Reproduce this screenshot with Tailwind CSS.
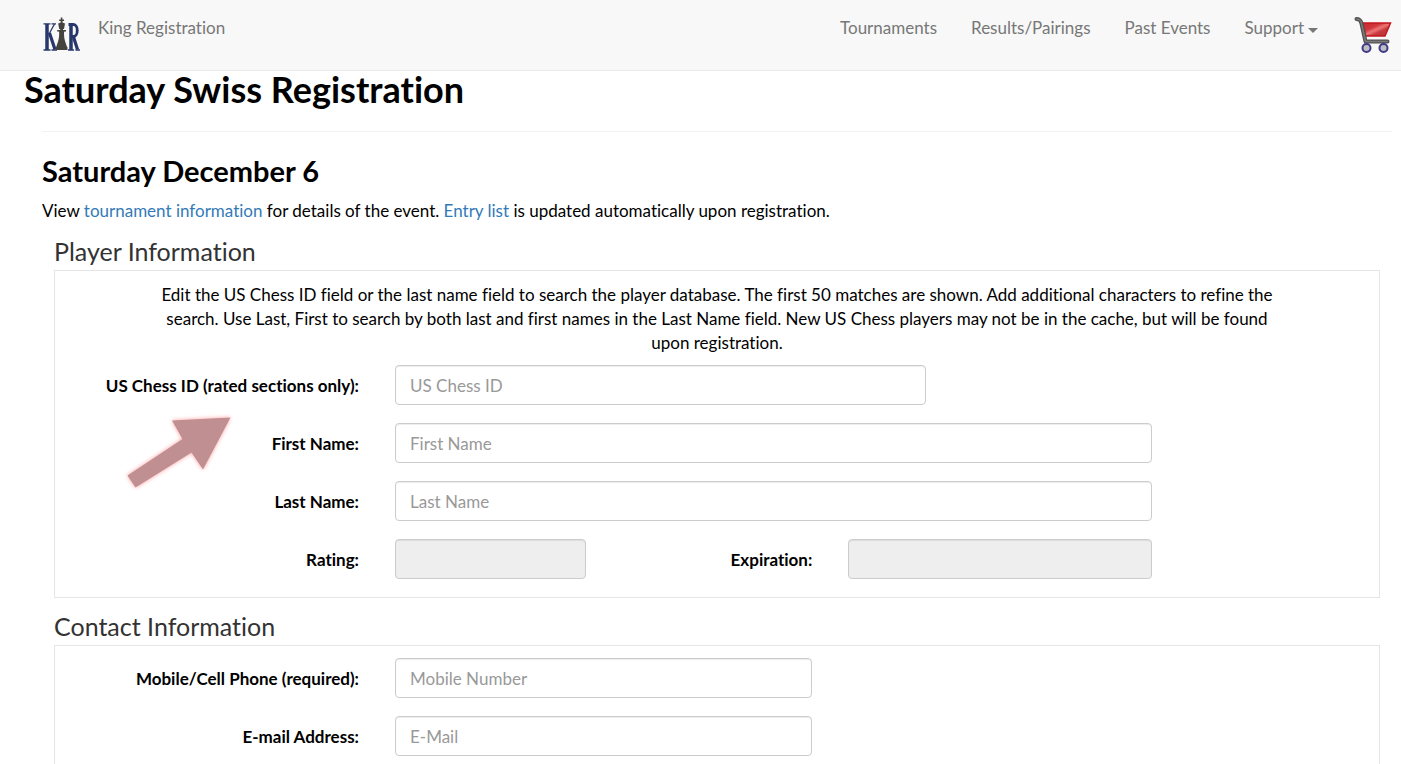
<!DOCTYPE html>
<html lang="en">
<head>
    <meta charset="UTF-8">
    <meta name="viewport" content="width=device-width, initial-scale=1.0">
    <title>Saturday Swiss Registration</title>
    <script src="https://cdn.jsdelivr.net/npm/@tailwindcss/browser@4"></script>
</head>
<body class="bg-white font-['Lato',sans-serif] text-[17px] leading-6 text-black [font-variant-ligatures:none]">
    <!-- Navbar -->
    <nav class="flex h-[71px] items-start justify-between border-b border-[#eaeaea] bg-[#f8f8f8] pl-[42px] pr-2 text-[#777]">
        <div class="flex items-start gap-[18px]">
            <a href="/" aria-label="Home" class="pt-4">
                <svg width="38" height="36" viewBox="0 0 38 36" aria-hidden="true">
                    <g fill="none" stroke="#27376b">
                        <path stroke-width="3.500" d="M5 8v26M29 8v26"/>
                        <path stroke-width="1.300" d="M1.500 7.800h7M1.500 34h7M9.500 34h5.500M9.500 7.800h4.500M26 34h6M33.500 34h4.500"/>
                        <path stroke-width="1.300" d="M12.500 8L6.500 19"/>
                        <path stroke-width="3.200" d="M7.500 17l5.500 16.500M31.500 21l4 12.500"/>
                        <path stroke-width="2.800" d="M26.500 8.500h5c5 0 5 12 0 12h-2"/>
                    </g>
                    <path fill="#45433f" d="M18.800 1.500h1.600v2h1.600v1.500h-1.500v1.500l2.500 1-1 5.500h-1v1h3v1.500h-1.500l-.5 1c0 3.500.3 6 1 8.500l1.500 4.500.5 1.500h.5v3H13.700v-3h.5l.5-1.500 1.500-4.500c.7-2.500 1-5 1-8.500l-.5-1h-1.500V14h3v-1h-1l-1-5.500 2.500-1V5h-1.500V3.500h1.600z"/>
                </svg>
            </a>
            <a href="/" class="pt-4">King Registration</a>
        </div>
        <div class="flex items-start gap-9 pt-4">
            <div class="flex items-start gap-[34px]">
                <a href="/tournaments">Tournaments</a>
                <a href="/results">Results/Pairings</a>
                <a href="/past">Past Events</a>
                <button type="button" class="flex items-center gap-1">Support
                    <span class="mt-1 border-x-[5px] border-t-[5px] border-x-transparent border-t-[#777]"></span>
                </button>
            </div>
            <a href="/cart" aria-label="Cart">
                <svg width="39" height="38" viewBox="0 0 39 38" aria-hidden="true">
                    <defs>
                        <linearGradient id="basket" x1="0" y1="0" x2="1" y2="1">
                            <stop offset="0" stop-color="#c9272d"/>
                            <stop offset=".35" stop-color="#d0383c"/>
                            <stop offset=".5" stop-color="#ee7777"/>
                            <stop offset=".65" stop-color="#c63a3e"/>
                            <stop offset="1" stop-color="#b93438"/>
                        </linearGradient>
                    </defs>
                    <path fill="url(#basket)" stroke="#c3161c" stroke-width="1.500" d="M8.500 7h28l-5.500 13H11.500z"/>
                    <g fill="none" stroke-linecap="round" stroke-linejoin="round">
                        <path stroke="#505050" stroke-width="4" d="M2.500 3c3 0 4 1 5 4.500l4 18h22"/>
                        <path stroke="#7b7b7b" stroke-width="1.500" d="M2.500 3c3 0 4 1 5 4.500l4 18h22"/>
                    </g>
                    <g fill="#bdbdc4" stroke="#3f3a86" stroke-width="2">
                        <circle cx="12.500" cy="32" r="4"/>
                        <circle cx="29.500" cy="32" r="4"/>
                    </g>
                </svg>
            </a>
        </div>
    </nav>

    <main class="pl-[42px] pr-[9px]">
        <h1 class="-ml-[18px] text-[36px] font-bold leading-[36px]">Saturday Swiss Registration</h1>
        <hr class="mt-6 border-[#f2f2f2]">
        <h2 class="mt-[23px] text-[29px] font-bold leading-8">Saturday December 6</h2>
        <p class="mt-3">View <a href="/info" class="text-[#337ab7]">tournament information</a> for details of the event. <a href="/entries" class="text-[#337ab7]">Entry list</a> is updated automatically upon registration.</p>

        <form class="px-3">
            <!-- Player Information -->
            <h3 class="mt-3 pb-[3px] text-[25px] leading-8 text-[#333]">Player Information</h3>
            <section class="relative border border-[#e5e5e5] pb-[18px] pt-3">
                <div class="grid grid-cols-12 items-center gap-x-9 gap-y-[18px]">
                    <p class="col-span-10 col-start-2 -mx-3 -mb-2 text-center">Edit the US Chess ID field or the last name field to search the player database. The first 50 matches are shown. Add additional characters to refine the search. Use Last, First to search by both last and first names in the Last Name field. New US Chess players may not be in the cache, but will be found upon registration.</p>

                    <label for="chessId" class="col-span-3 pt-0.5 text-right font-bold">US Chess ID (rated sections only):</label>
                    <input id="chessId" type="text" placeholder="US Chess ID" class="col-span-5 h-10 min-w-0 rounded border border-[#ccc] px-3.5 shadow-[inset_0_1px_1px_rgba(0,0,0,0.075)] placeholder:text-[#999]">

                    <label for="firstName" class="col-span-3 col-start-1 pt-0.5 text-right font-bold">First Name:</label>
                    <input id="firstName" type="text" placeholder="First Name" class="col-span-7 h-10 min-w-0 rounded border border-[#ccc] px-3.5 shadow-[inset_0_1px_1px_rgba(0,0,0,0.075)] placeholder:text-[#999]">

                    <label for="lastName" class="col-span-3 col-start-1 pt-0.5 text-right font-bold">Last Name:</label>
                    <input id="lastName" type="text" placeholder="Last Name" class="col-span-7 h-10 min-w-0 rounded border border-[#ccc] px-3.5 shadow-[inset_0_1px_1px_rgba(0,0,0,0.075)] placeholder:text-[#999]">

                    <label for="rating" class="col-span-3 col-start-1 pt-0.5 text-right font-bold">Rating:</label>
                    <input id="rating" type="text" readonly class="col-span-2 h-10 min-w-0 rounded border border-[#ccc] bg-[#eee] px-3.5 shadow-[inset_0_1px_1px_rgba(0,0,0,0.075)]">
                    <label for="expiration" class="col-span-2 pt-0.5 text-right font-bold">Expiration:</label>
                    <input id="expiration" type="text" readonly class="col-span-3 h-10 min-w-0 rounded border border-[#ccc] bg-[#eee] px-3.5 shadow-[inset_0_1px_1px_rgba(0,0,0,0.075)]">
                </div>

                <!-- Arrow pointing at the ID field -->
                <svg class="pointer-events-none absolute left-16 top-[140px] drop-shadow-[0_0_2px_#ff9c9c]" width="120" height="84" viewBox="0 0 120 84" aria-hidden="true">
                    <path fill="#c08f92" d="M111.500 6.500L53 9.500l10.500 18.500L8.500 64.500l8 12 56-35 11.500 17z"/>
                </svg>
            </section>

            <!-- Contact Information -->
            <h3 class="mt-3 pb-[3px] text-[25px] leading-8 text-[#333]">Contact Information</h3>
            <section class="border border-[#e5e5e5] pb-[18px] pt-3">
                <div class="grid grid-cols-12 items-center gap-x-9 gap-y-[18px]">
                    <label for="phone" class="col-span-3 pt-0.5 text-right font-bold">Mobile/Cell Phone (required):</label>
                    <input id="phone" type="tel" placeholder="Mobile Number" class="col-span-4 h-10 min-w-0 rounded border border-[#ccc] px-3.5 shadow-[inset_0_1px_1px_rgba(0,0,0,0.075)] placeholder:text-[#999]">

                    <label for="email" class="col-span-3 col-start-1 pt-0.5 text-right font-bold">E-mail Address:</label>
                    <input id="email" type="email" placeholder="E-Mail" class="col-span-4 h-10 min-w-0 rounded border border-[#ccc] px-3.5 shadow-[inset_0_1px_1px_rgba(0,0,0,0.075)] placeholder:text-[#999]">
                </div>
            </section>
        </form>
    </main>
</body>
</html>
